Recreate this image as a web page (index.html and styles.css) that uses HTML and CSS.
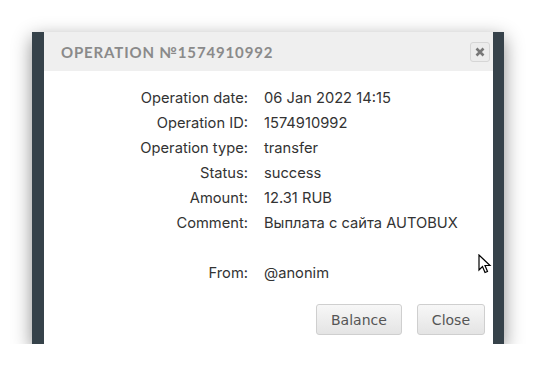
FILE: index.html
```html
<!DOCTYPE html>
<html lang="en">
<head>
    <meta charset="UTF-8">
    <title>Operation</title>
    <link rel="stylesheet" href="styles.css">
</head>
<body>
    <div class="window">
        <div class="strip"></div>
        <div class="dialog">
            <div class="dialog-head">
                <span class="dialog-title">OPERATION №1574910992</span>
                <button class="x-btn">
                    <svg width="10" height="10" viewBox="0 0 10 10"><path d="M1.5 1.5 L8.5 8.5 M8.5 1.5 L1.5 8.5" stroke="#777" stroke-width="2.6" stroke-linecap="butt"/></svg>
                </button>
            </div>
            <div class="dialog-body">
                <div class="info">
                    <span class="label">Operation date:</span><span>06 Jan 2022 14:15</span>
                    <span class="label">Operation ID:</span><span>1574910992</span>
                    <span class="label">Operation type:</span><span>transfer</span>
                    <span class="label">Status:</span><span>success</span>
                    <span class="label">Amount:</span><span>12.31 RUB</span>
                    <span class="label">Comment:</span><span>Выплата с сайта AUTOBUX</span>
                    <span class="label"></span><span></span>
                    <span class="label">From:</span><span>@anonim</span>
                </div>
                <div class="buttons">
                    <button class="btn">Balance</button>
                    <button class="btn">Close</button>
                </div>
            </div>
        </div>
        <div class="strip strip-right"></div>
        <svg class="cursor" width="14" height="20" viewBox="0 0 14 20"><path d="M1 1 L1 16 L4.5 12.5 L7 18.5 L9.5 17.5 L7 11.5 L12 11.5 Z" fill="#fff" stroke="#000" stroke-width="1.2" stroke-linejoin="miter"/></svg>
    </div>
</body>
</html>
```
FILE: styles.css
```css
body {
    margin: 0;
    background: #fff;
    font-family: Inter, sans-serif;
}
.window {
    position: relative;
    margin: 32px 0 0 32px;
    width: 472px;
    height: 312px;
    display: flex;
    box-shadow: 0 6px 18px rgba(0, 0, 0, 0.45);
}
.strip {
    width: 12px;
    background: #36424a;
}
.strip-right {
    width: 11px;
}
.dialog {
    flex: 1;
    display: flex;
    flex-direction: column;
    background: #fff;
}
.dialog-head {
    height: 39px;
    background: #efefef;
    display: flex;
    align-items: center;
    justify-content: space-between;
    padding: 0 3px 0 17px;
}
.dialog-title {
    font-family: Lato, sans-serif;
    font-weight: 700;
    font-size: 15px;
    letter-spacing: 0.85px;
    color: #8a8a8a;
}
.x-btn {
    width: 20px;
    height: 20px;
    padding: 0;
    border: 1px solid #d6d6d6;
    border-radius: 3px;
    background: #ececec;
    display: flex;
    align-items: center;
    justify-content: center;
}
.dialog-body {
    flex: 1;
    display: flex;
    flex-direction: column;
    padding-top: 14px;
}
.info {
    display: grid;
    grid-template-columns: 204px 1fr;
    grid-auto-rows: 25px;
    column-gap: 16px;
    font-size: 14.7px;
    color: #333;
    align-items: center;
}
.label {
    text-align: right;
}
.buttons {
    margin-top: auto;
    display: flex;
    justify-content: flex-end;
    gap: 15px;
    padding: 0 8px 9px 0;
}
.btn {
    height: 31px;
    padding: 0 14px;
    border: 1px solid #cfcfcf;
    border-radius: 3px;
    background: linear-gradient(#f7f7f7, #e4e4e4);
    font-family: "DejaVu Sans", sans-serif;
    font-size: 14px;
    color: #555;
}
.cursor {
    position: absolute;
    left: 446px;
    top: 222px;
}
```
